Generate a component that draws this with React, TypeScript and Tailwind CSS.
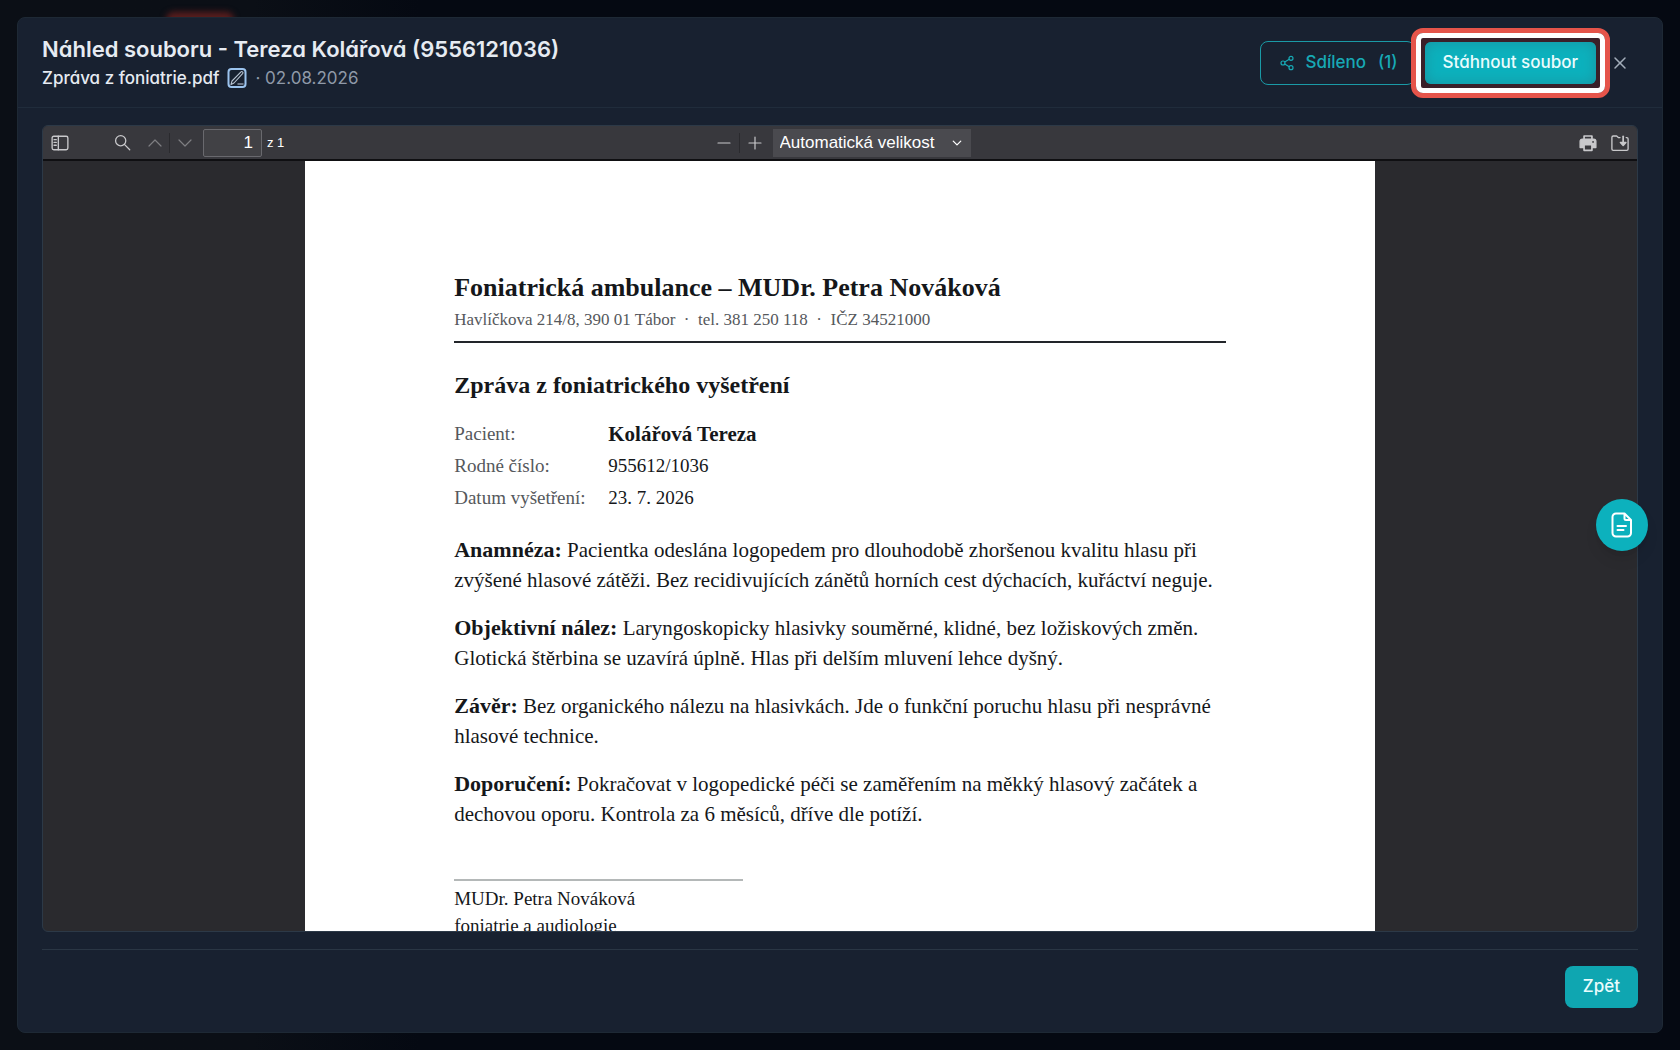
import React, { ReactNode } from 'react';
import { Share2, X } from 'lucide-react';

const PATIENT_ROWS = [
  { label: 'Pacient:', value: 'Kolářová Tereza', strong: true },
  { label: 'Rodné číslo:', value: '955612/1036', strong: false },
  { label: 'Datum vyšetření:', value: '23. 7. 2026', strong: false },
];

const SECTIONS = [
  {
    title: 'Anamnéza:',
    text: 'Pacientka odeslána logopedem pro dlouhodobě zhoršenou kvalitu hlasu při zvýšené hlasové zátěži. Bez recidivujících zánětů horních cest dýchacích, kuřáctví neguje.',
  },
  {
    title: 'Objektivní nález:',
    text: 'Laryngoskopicky hlasivky souměrné, klidné, bez ložiskových změn. Glotická štěrbina se uzavírá úplně. Hlas při delším mluvení lehce dyšný.',
  },
  {
    title: 'Závěr:',
    text: 'Bez organického nálezu na hlasivkách. Jde o funkční poruchu hlasu při nesprávné hlasové technice.',
  },
  {
    title: 'Doporučení:',
    text: 'Pokračovat v logopedické péči se zaměřením na měkký hlasový začátek a dechovou oporu. Kontrola za 6 měsíců, dříve dle potíží.',
  },
];

function Icon({ children, className = 'size-4' }: { children: ReactNode, className?: string }) {
  return (
    <svg viewBox="0 0 16 16" fill="none" stroke="currentColor" strokeWidth="1.2" strokeLinecap="round" strokeLinejoin="round" aria-hidden="true" className={className}>
      {children}
    </svg>
  )
}

function ToolButton({ label, children, dim = false }: { label: string, children: ReactNode, dim?: boolean }) {
  return (
    <button type="button" aria-label={label} className={dim ? 'flex h-7 w-7 items-center justify-center text-[#7e7e82]' : 'flex h-7 w-7 items-center justify-center text-[#c8c8cb]'}>
      {children}
    </button>
  )
}

function Header() {
  return (
    <header className="flex items-start justify-between border-b border-[#202c3b] pt-[17px] pr-8 pb-[17px] pl-6">
      <div>
        <h1 className="text-[22px] leading-7 font-semibold text-[#e6ebf2]">Náhled souboru - Tereza Kolářová (9556121036)</h1>
        <div className="mt-[3px] flex items-center text-[17px] leading-6 text-[#e6ebf2]">
          <span className="font-medium">Zpráva z foniatrie.pdf</span>
          <button type="button" aria-label="Přejmenovat" className="ml-2">
            <svg viewBox="0 0 20 22" fill="none" aria-hidden="true" className="h-[22px] w-5">
              <rect x="1.5" y="2" width="17" height="18" rx="3" stroke="#9cc4ee" strokeWidth="2" />
              <path d="M4 17.5l1-3.5 9-9.200c.8-.8 2.600.6 1.800 1.600L7 16z" stroke="#b9c4d2" strokeWidth="1.1" strokeLinejoin="round" />
              <path d="M10.500 17h6" stroke="#b9c4d2" strokeWidth="1.1" />
            </svg>
          </button>
          <span className="ml-2 text-[#8f99a8]">· 02.08.2026</span>
        </div>
      </div>

      <div className="flex items-center pt-1.5">
        <button type="button" className="mr-2.5 flex h-11 items-center rounded-lg border border-[#1a9aa6] pr-4 pl-[18px] text-[17px] font-medium text-[#17a9b5]">
          <Share2 aria-hidden="true" className="mr-2.5 size-4" strokeWidth={1.8} />
          <span>Sdíleno</span>
          <span className="ml-3">(1)</span>
        </button>
        <div className="relative">
          <span aria-hidden="true" className="absolute -inset-[14px] rounded-xl border-[5px] border-[#e5544a] bg-[#3a2029]">
            <span className="block h-full rounded-[7px] border-[5px] border-white" />
          </span>
          <button type="button" className="relative h-[42px] rounded-md bg-[#0cb1bd] px-[18px] text-[17px] font-medium text-[#eafcfd] shadow-[inset_0_0_14px_#1a93a0]">Stáhnout soubor</button>
        </div>
        <button type="button" aria-label="Zavřít" className="ml-3.5 text-[#a3adba]">
          <X aria-hidden="true" className="size-5" strokeWidth={1.8} />
        </button>
      </div>
    </header>
  )
}

function Toolbar() {
  return (
    <div className="flex h-[35px] shrink-0 items-center border-b-2 border-[#0f0f12] bg-[#38383d] px-[3px] font-['Liberation_Sans',sans-serif] text-white">
      <div className="flex flex-1 items-center">
        <ToolButton label="Postranní lišta">
          <Icon className="size-[18px]">
            <rect x="1" y="2" width="14" height="12" rx="1.500" />
            <path d="M6.500 2v12M2.700 5h2M2.700 7.500h2M2.700 10h2" />
          </Icon>
        </ToolButton>
        <div className="ml-[34px] flex items-center">
          <ToolButton label="Najít">
            <Icon className="size-[17px]">
              <circle cx="6.300" cy="6.300" r="4.800" />
              <path d="M10 10l4.800 4.800" />
            </Icon>
          </ToolButton>
          <div className="ml-[5px] flex items-center">
            <ToolButton label="Předchozí" dim>
              <Icon><path d="M2 11l6-6 6 6" /></Icon>
            </ToolButton>
            <span className="mr-px h-5 w-px bg-[#2a2a2e]" />
            <ToolButton label="Další" dim>
              <Icon><path d="M2 5l6 6 6-6" /></Icon>
            </ToolButton>
          </div>
        </div>
        <input aria-label="Stránka" defaultValue="1" className="ml-1 h-7 w-[59px] rounded-xs border border-[#69696e] bg-[#414145] pr-2 text-right text-[17px] outline-none" />
        <span className="ml-[5px] text-[13px]">z 1</span>
      </div>

      <div className="flex items-center">
        <ToolButton label="Zmenšit">
          <Icon><path d="M2 8h12" /></Icon>
        </ToolButton>
        <span className="mx-px h-5 w-px bg-[#2a2a2e]" />
        <ToolButton label="Zvětšit">
          <Icon><path d="M2 8h12M8 2v12" /></Icon>
        </ToolButton>
        <div className="relative ml-1">
          <select aria-label="Velikost" className="h-7 w-[198px] appearance-none bg-[#4a4a4f] pl-[7px] text-[17px] text-white outline-none">
            <option>Automatická velikost</option>
          </select>
          <Icon className="pointer-events-none absolute top-2 right-2 size-3"><path d="M3 5.500l5 5 5-5" strokeWidth="1.700" /></Icon>
        </div>
      </div>

      <div className="flex flex-1 items-center justify-end gap-1">
        <ToolButton label="Tisk">
          <Icon className="size-[18px]">
            <path d="M4.500 5V1.800h7V5" strokeWidth="1.500" />
            <path d="M1 12V6.500A2 2 0 0 1 3 4.500h10a2 2 0 0 1 2 2V12h-3v-2H4v2z" fill="currentColor" />
            <path d="M4.500 9.500v5h7v-5z" fill="#38383d" strokeWidth="1.500" />
            <circle cx="12.500" cy="7" r=".8" fill="#38383d" stroke="none" />
          </Icon>
        </ToolButton>
        <ToolButton label="Uložit">
          <Icon className="size-[18px]">
            <path d="M8 3.200H6.500L5 1.800H2A1.200 1.200 0 0 0 .8 3v10.300A1.200 1.200 0 0 0 2 14.500h12a1.200 1.200 0 0 0 1.200-1.200V4.400A1.200 1.200 0 0 0 14 3.200h-.5" />
            <path d="M10.800 2v6" strokeWidth="1.500" />
            <path d="M8.300 7.500l2.500 2.800 2.500-2.800z" fill="currentColor" />
          </Icon>
        </ToolButton>
      </div>
    </div>
  )
}

function Report() {
  return (
    <article className="mx-auto w-[67.1%] bg-white px-[149px] pt-[107px] pb-24 font-['Liberation_Serif',serif] text-[#15171a]">
      <h2 className="text-[26px] leading-10 font-bold">Foniatrická ambulance – MUDr. Petra Nováková</h2>
      <p className="text-[17px] leading-6 whitespace-pre text-[#55585c]">Havlíčkova 214/8, 390 01 Tábor  ·  tel. 381 250 118  ·  IČZ 34521000</p>
      <hr className="mt-[9px] border-t-2 border-[#22252a]" />

      <h3 className="mt-6 text-2xl leading-9 font-bold">Zpráva z foniatrického vyšetření</h3>
      <table className="mt-[15px] text-[19px] leading-8">
        <tbody>
          {PATIENT_ROWS.map((row) => (
            <tr key={row.label}>
              <th scope="row" className="w-[154px] p-0 text-left font-normal text-[#55585c]">{row.label}</th>
              <td className={row.strong ? 'p-0 text-[21px] font-bold' : 'p-0'}>{row.value}</td>
            </tr>
          ))}
        </tbody>
      </table>

      <div className="mt-[21px] space-y-[18px] text-[21px] leading-[30px]">
        {SECTIONS.map((section) => (
          <p key={section.title}><strong className="text-[22px]">{section.title}</strong> {section.text}</p>
        ))}
      </div>

      <div className="mt-[50px] w-[289px] border-t-2 border-[#b4b8b8] pt-1 text-[19px] leading-[27px]">
        <p>MUDr. Petra Nováková</p>
        <p>foniatrie a audiologie</p>
      </div>
    </article>
  )
}

export default function App() {
  return (
    <div className="relative h-screen overflow-hidden bg-linear-to-r from-[#0b0f16] from-15% to-[#050912] to-25% p-[17px] font-['Inter',sans-serif] [font-feature-settings:'cv11']">
      <span aria-hidden="true" className="absolute top-3 left-[166px] h-4 w-[68px] rounded-lg bg-[#5a1d1d] blur-[3px]" />

      <div role="dialog" aria-label="Náhled souboru" className="relative flex h-full flex-col rounded-lg border border-[#1e2935] bg-[#182130]">
        <Header />
        <main className="flex min-h-0 flex-1 flex-col px-6 pt-[17px]">
          <section className="flex min-h-0 flex-1 flex-col overflow-hidden rounded-md border border-[#2c3947] bg-[#2a2a2e]">
            <Toolbar />
            <div className="min-h-0 flex-1 overflow-hidden">
              <Report />
            </div>
          </section>
        </main>
        <footer className="mx-6 mt-[17px] flex justify-end border-t border-[#2a3644] pt-4 pb-6">
          <button type="button" className="h-[42px] rounded-lg bg-[#0fa6b1] px-[18px] text-[17px] font-medium text-[#eafcfd]">Zpět</button>
        </footer>
        <button type="button" aria-label="Poznámky" className="absolute top-[481px] right-3.5 flex size-[52px] items-center justify-center rounded-full bg-[#0cb1bd] text-white shadow-lg">
          <svg viewBox="0 0 22 26" fill="none" stroke="currentColor" strokeWidth="2" strokeLinecap="round" strokeLinejoin="round" aria-hidden="true" className="h-[26px] w-[22px]">
            <path d="M13.500 1.500H5A3.500 3.500 0 0 0 1.500 5v16A3.500 3.500 0 0 0 5 24.500h11.500A3.500 3.500 0 0 0 20 21V8zV6.500A1.500 1.500 0 0 0 15 8h5" />
            <path d="M6.500 14h8.500M6.500 18h6" />
          </svg>
        </button>
      </div>
    </div>
  );
}
